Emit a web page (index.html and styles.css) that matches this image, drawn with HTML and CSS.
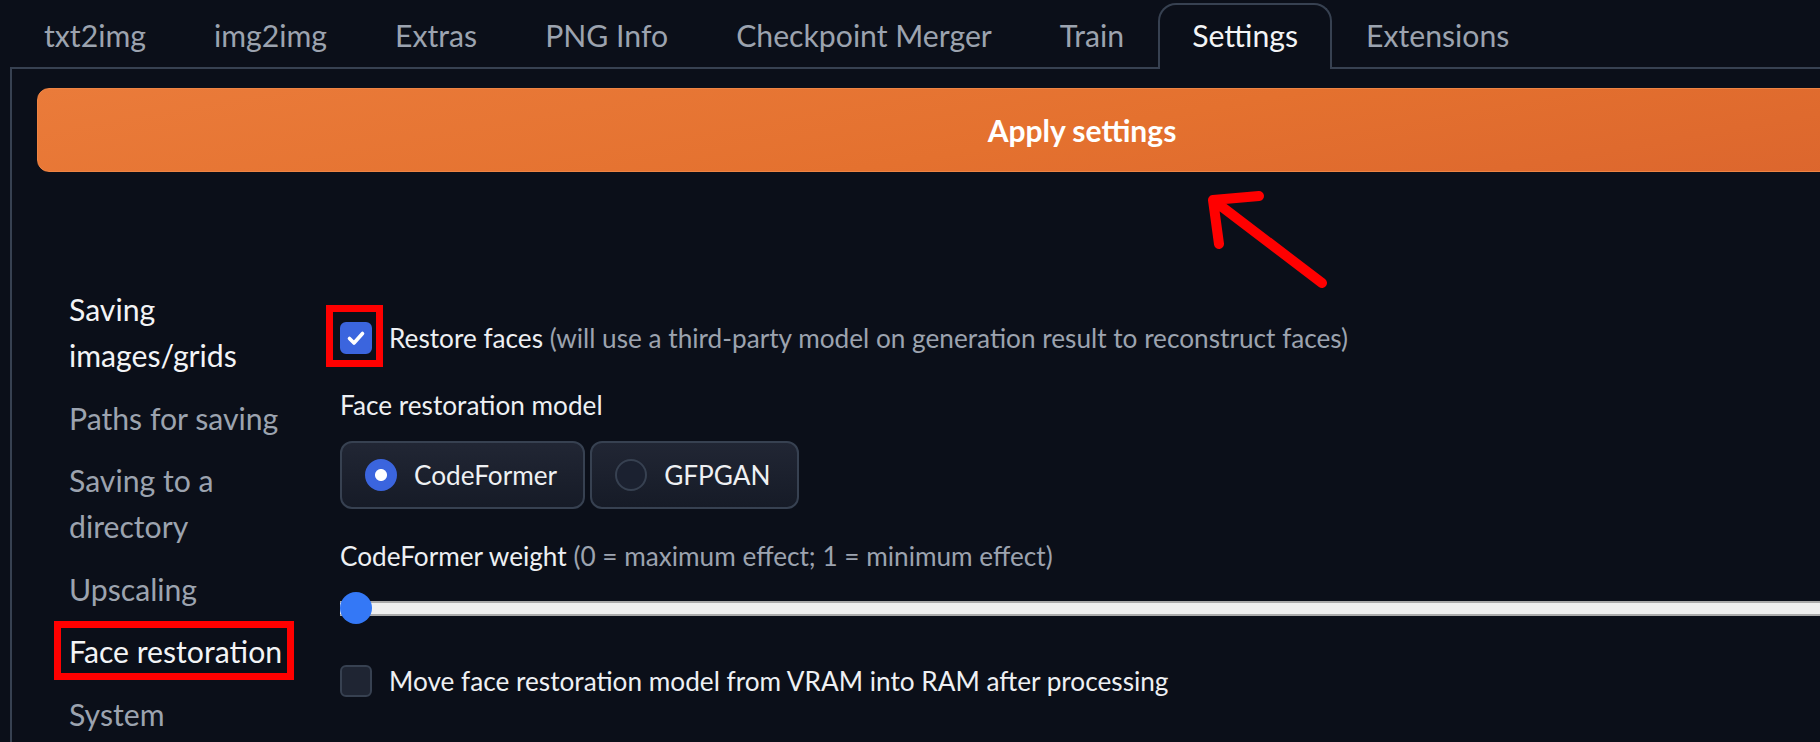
FILE: index.html
```html
<!DOCTYPE html>
<html lang="en">
<head>
<meta charset="utf-8">
<title>Settings</title>
<link rel="stylesheet" href="styles.css">
</head>
<body>
<div class="app">
  <nav class="tabs">
    <div class="tab">txt2img</div>
    <div class="tab">img2img</div>
    <div class="tab">Extras</div>
    <div class="tab">PNG Info</div>
    <div class="tab">Checkpoint Merger</div>
    <div class="tab">Train</div>
    <div class="tab selected">Settings</div>
    <div class="tab">Extensions</div>
  </nav>
  <div class="panel">
    <div class="apply">Apply settings</div>
    <div class="settings">
      <ul class="sidebar">
        <li class="bright">Saving<br>images/grids</li>
        <li>Paths for saving</li>
        <li>Saving to a<br>directory</li>
        <li>Upscaling</li>
        <li class="bright"><span class="marked">Face restoration</span></li>
        <li>System</li>
      </ul>
      <div class="content">
        <div class="check-row">
          <span class="checkbox checked marked-box">
            <svg viewBox="0 0 32 32" width="32" height="32"><path d="M9.5 16.5 L14 21 L22.5 11.5" fill="none" stroke="#fff" stroke-width="3.6" stroke-linecap="round" stroke-linejoin="round"/></svg>
          </span>
          <span class="label">Restore faces <span class="info">(will use a third-party model on generation result to reconstruct faces)</span></span>
        </div>
        <div class="field-label">Face restoration model</div>
        <div class="radio-group">
          <div class="radio-item"><span class="radio on"></span><span>CodeFormer</span></div>
          <div class="radio-item"><span class="radio"></span><span>GFPGAN</span></div>
        </div>
        <div class="field-label weight">CodeFormer weight <span class="info">(0 = maximum effect; 1 = minimum effect)</span></div>
        <div class="slider">
          <div class="track"></div>
          <div class="thumb"></div>
        </div>
        <div class="check-row last">
          <span class="checkbox"></span>
          <span class="label">Move face restoration model from VRAM into RAM after processing</span>
        </div>
      </div>
    </div>
  </div>
  <svg class="arrow" width="160" height="120" viewBox="1190 180 160 120">
    <path d="M1322 283 L1213 200 M1259 196 L1213 200 L1219 244" fill="none" stroke="#ff0000" stroke-width="10" stroke-linecap="round" stroke-linejoin="round"/>
  </svg>
</div>
</body>
</html>
```
FILE: styles.css
```css
* {
  box-sizing: border-box;
  margin: 0;
  padding: 0;
}

html,
body {
  background: #0b0f19;
  overflow: hidden;
}

body {
  width: 1820px;
  height: 742px;
  font-family: Lato, "Noto Sans", sans-serif;
  color: #e5e7eb;
}

.app {
  position: relative;
  width: 2150px;
  padding-left: 10px;
}

.tabs {
  display: flex;
  align-items: flex-end;
  height: 69px;
  border-bottom: 2px solid #374151;
}

.tab {
  height: 66px;
  margin-bottom: -2px;
  padding: 0 32px 4px;
  display: flex;
  align-items: center;
  font-size: 30.2px;
  color: #9ca3af;
  border: 2px solid transparent;
  border-bottom: none;
  border-radius: 18px 18px 0 0;
  white-space: nowrap;
}

.tab.selected {
  color: #f3f4f6;
  border-color: #374151;
  background: #0b0f19;
}

.panel {
  border-left: 2px solid #374151;
  height: 700px;
  padding: 19px 0 0 25px;
}

.apply {
  width: 2090px;
  height: 84px;
  border-radius: 12px;
  border: 1px solid #ee8444;
  background: linear-gradient(170deg, #ea7b3a 0%, #e4712f 50%, #da632d 100%);
  color: #fff;
  font-weight: 700;
  font-size: 30px;
  display: flex;
  align-items: center;
  justify-content: center;
}

.settings {
  display: flex;
  margin: 114px 0 0 32px;
}

.sidebar {
  list-style: none;
  width: 271px;
  flex: none;
}

.sidebar li {
  font-size: 30.2px;
  line-height: 46px;
  color: #9ca3af;
  margin-bottom: 16.6px;
  white-space: nowrap;
}

.sidebar li.bright {
  color: #f3f4f6;
}

.marked {
  position: relative;
  display: inline-block;
}

.marked::after {
  content: "";
  position: absolute;
  left: -15px;
  right: -12px;
  top: -7px;
  bottom: -6px;
  border: 7px solid #ff0000;
}

.content {
  flex: 1;
  padding-top: 29px;
  font-size: 26.2px;
}

.check-row {
  display: flex;
  align-items: center;
  height: 46px;
  gap: 17px;
  white-space: nowrap;
}

.check-row.last {
  margin-top: 34px;
}

.checkbox {
  position: relative;
  flex: none;
  width: 32px;
  height: 32px;
  border-radius: 6px;
  background: #1f2533;
  border: 2px solid #374151;
}

.checkbox.checked {
  background: #3b65de;
  border-color: #3b65de;
}

.checkbox svg {
  position: absolute;
  left: -2px;
  top: -2px;
}

.marked-box::after {
  content: "";
  position: absolute;
  left: -16px;
  right: -13px;
  top: -19px;
  bottom: -15px;
  border: 7px solid #ff0000;
}

.label {
  color: #eef0f3;
}

.info {
  color: #9ca3af;
}

.field-label {
  margin-top: 24px;
  line-height: 40px;
  color: #eef0f3;
  white-space: nowrap;
}

.field-label.weight {
  margin-top: 27px;
}

.radio-group {
  display: flex;
  gap: 5px;
  margin-top: 16px;
}

.radio-item {
  display: flex;
  align-items: center;
  gap: 17px;
  height: 68px;
  padding: 0 26px 0 23px;
  border: 2px solid #374151;
  border-radius: 12px;
  background: linear-gradient(180deg, #212634 0%, #161b27 100%);
  color: #eef0f3;
}

.radio {
  width: 32px;
  height: 32px;
  border-radius: 50%;
  border: 2px solid #374151;
  background: #1b2130;
  flex: none;
}

.radio.on {
  border-color: #3b65de;
  background: radial-gradient(circle, #ffffff 0 5.5px, #3b65de 6.5px);
}

.slider {
  position: relative;
  margin-top: 16px;
  height: 32px;
}

.track {
  position: absolute;
  left: 0;
  right: 0;
  top: 9px;
  height: 15px;
  background: #efefef;
  border-top: 2px solid #aaaaaa;
  border-bottom: 2px solid #aaaaaa;
}

.thumb {
  position: absolute;
  left: 0;
  top: 0;
  width: 32px;
  height: 32px;
  border-radius: 50%;
  background: #3478f6;
}

.arrow {
  position: absolute;
  left: 1190px;
  top: 180px;
}
```
